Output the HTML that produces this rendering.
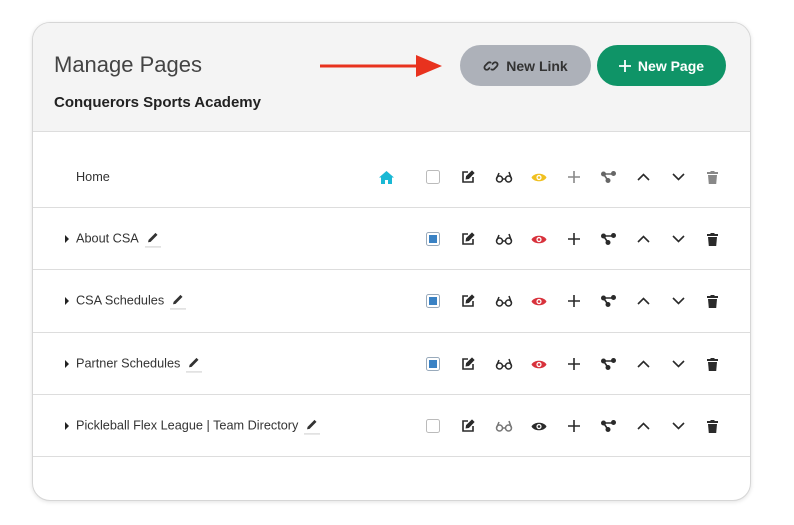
<!DOCTYPE html>
<html><head><meta charset="utf-8"><style>
body{margin:0;width:794px;height:525px;background:#fff;font-family:"Liberation Sans",sans-serif;position:relative;overflow:hidden}
.card{position:absolute;left:32px;top:22px;width:717px;height:477px;border:1px solid #d6d6d6;border-radius:18px;box-shadow:0 1px 4px rgba(0,0,0,.12);overflow:hidden;background:#fff}
.hdr{position:absolute;left:0;top:0;width:100%;height:108px;background:#f4f4f4;border-bottom:1px solid #ddd}
.t1{position:absolute;left:21px;top:29px;font-size:22px;color:#444}
.t2{position:absolute;left:21px;top:71px;font-size:15px;font-weight:bold;color:#222}
.btn{position:absolute;top:22px;height:41px;border-radius:21px;font-size:14px;font-weight:bold;display:flex;align-items:center;justify-content:center;gap:7px}
.row{position:absolute;left:0;width:100%;border-bottom:1px solid #ddd}
.lbl{position:absolute;left:43px;font-size:12.7px;color:#333;line-height:16px;transform:translateY(-50%)}
.ic{position:absolute;height:20px;display:flex;align-items:center;justify-content:center;width:20px;transform:translateY(-50%)}
.car{position:absolute;left:32px;width:0;height:0;border-left:4px solid #222;border-top:4px solid transparent;border-bottom:4px solid transparent;transform:translateY(-50%)}
.pen{display:inline-block;margin-left:6px;border-bottom:1px solid #ccc;padding:0 3px;vertical-align:middle}
</style></head><body>
<div class="card">
<div class="hdr">
<div class="t1">Manage Pages</div>
<div class="t2">Conquerors Sports Academy</div>
<svg style="position:absolute;left:287px;top:30px" width="124" height="26"><line x1="0" y1="13" x2="100" y2="13" stroke="#e8321e" stroke-width="3"/><polygon points="96,2 122,13 96,24" fill="#e8321e"/></svg>
<div class="btn" style="left:427px;width:131px;background:#adb1b9;color:#333"><svg width="16" height="16" viewBox="0 0 16 16" fill="none" stroke="#333" stroke-width="1.8"><path d="M7 9.5l-1.6 1.6a2.3 2.3 0 0 1-3.3-3.3L4.8 5a2.3 2.3 0 0 1 3.3 0M9 6.5l1.6-1.6a2.3 2.3 0 0 1 3.3 3.3L11.2 11a2.3 2.3 0 0 1-3.3 0"/></svg>New Link</div>
<div class="btn" style="left:564px;width:129px;background:#0f9467;color:#fff"><svg width="12" height="12" stroke="#fff" stroke-width="1.8"><path d="M6 0v12M0 6h12"/></svg>New Page</div>
</div>
<div id="rows"></div>
</div>
<script>
const X=[386,433,468,504,539,574,608,643,678,712];
const dark='#2a2a2a',grey='#888';
function chk(on){return on?`<svg width="14" height="14"><rect x="0.5" y="0.5" width="13" height="13" rx="2" fill="#fff" stroke="#9ab"/><rect x="3" y="3" width="8" height="8" fill="#3a82c4"/></svg>`:`<svg width="14" height="14"><rect x="0.5" y="0.5" width="13" height="13" rx="2" fill="#fff" stroke="#bbb"/></svg>`}
const edit=`<svg width="14" height="14" viewBox="0 0 14 14" fill="none" stroke="#2a2a2a" stroke-width="1.6"><path d="M7 2H2v10h10V7"/><path d="M5.5 8.5l.3-2L11 1.5l1.5 1.5-5 5.2z" fill="#2a2a2a"/></svg>`;
const gl=c=>`<svg width="18" height="12" viewBox="0 0 18 12" fill="none" stroke="${c}" stroke-width="1.5"><circle cx="4.5" cy="8" r="3"/><circle cx="13.5" cy="8" r="3"/><path d="M7.5 8h3M1.5 8L4 2M16.5 8L14 1"/></svg>`;
const eye=c=>`<svg width="16" height="11" viewBox="0 0 16 11"><path d="M0.5 5.5C3 0.5 13 0.5 15.5 5.5C13 10.5 3 10.5 0.5 5.5z" fill="${c}"/><circle cx="8" cy="5.5" r="2.6" fill="#fff"/><circle cx="8" cy="5.5" r="1.3" fill="${c}"/></svg>`;
const plus=c=>`<svg width="12" height="12" stroke="${c}" stroke-width="1.6"><path d="M6 0v12M0 6h12"/></svg>`;
const tree=c=>`<svg width="15" height="12" viewBox="0 0 15 12" fill="${c}"><circle cx="2.5" cy="3" r="2.5"/><circle cx="12.5" cy="2.5" r="2.5"/><circle cx="7" cy="9.5" r="2.5"/><path d="M2.5 3h10M2.5 3l4.5 6.5" stroke="${c}" stroke-width="1.6"/></svg>`;
const up=`<svg width="13" height="8" fill="none" stroke="#2a2a2a" stroke-width="1.6"><path d="M1 7l5.5-5.5L12 7"/></svg>`;
const dn=`<svg width="13" height="8" fill="none" stroke="#2a2a2a" stroke-width="1.6"><path d="M1 1l5.5 5.5L12 1"/></svg>`;
const tr=c=>`<svg width="11" height="13" viewBox="0 0 11 13" fill="${c}"><rect x="0" y="1" width="11" height="2"/><rect x="3.5" y="0" width="4" height="2"/><path d="M1 4h9l-.8 9H1.8z"/></svg>`;
const home=`<svg width="15" height="13" viewBox="0 0 15 13" fill="#1ab8d4"><path d="M7.5 0L15 6.5h-2V13H9V9H6v4H2V6.5H0z"/></svg>`;
const pen=`<svg width="10" height="10" viewBox="0 0 10 10" fill="#333"><path d="M0 10l.6-2.6L7.5.5l2 2-6.9 6.9z"/></svg>`;
const rows=[
 {n:'Home',home:1,c:0,eye:'#f0c020',y:109,h:75,cy:45},
 {n:'About CSA',c:1,eye:'#d8323c',y:185,h:61,cy:31},
 {n:'CSA Schedules',c:1,eye:'#d8323c',y:247,h:62,cy:31},
 {n:'Partner Schedules',c:1,eye:'#d8323c',y:310,h:61,cy:31},
 {n:'Pickleball Flex League | Team Directory',c:0,eye:'#2a2a2a',gl:'#777',y:372,h:61,cy:31}];
let h='';
rows.forEach(r=>{
 h+=`<div class="row" style="top:${r.y}px;height:${r.h}px">`;
 if(r.home)h+=`<div class="lbl" style="top:${r.cy}px">Home</div>`;
 else h+=`<div class="car" style="top:${r.cy}px"></div><div class="lbl" style="top:${r.cy}px">${r.n}<span class="pen">${pen}</span></div>`;
 const icons=[r.home?home:'',chk(r.c),edit,gl(r.gl||dark),eye(r.eye),plus(r.home?grey:dark),tree(r.home?'#666':dark),up,dn,tr(r.home?'#888':dark)];
 icons.forEach((s,i)=>{if(s)h+=`<div class="ic" style="left:${X[i]-33-10}px;top:${r.cy}px">${s}</div>`});
 h+='</div>';
});
document.getElementById('rows').innerHTML=h;
</script>
</body></html>
